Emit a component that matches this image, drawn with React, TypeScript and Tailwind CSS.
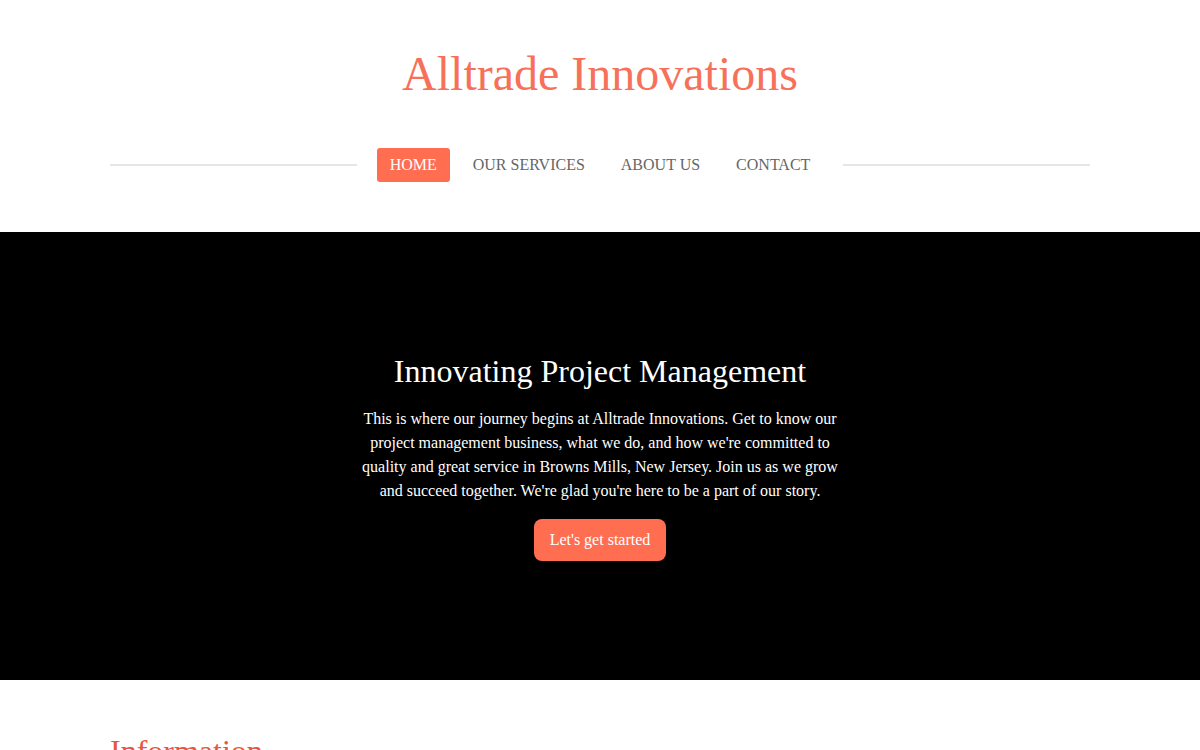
const NAV = ["HOME", "OUR SERVICES", "ABOUT US", "CONTACT"];

export default function App() {
  return (
    <div className="min-h-screen bg-white font-['Liberation_Serif',serif]">
      {/* Header */}
      <header className="pt-[45px] pb-[50px]">
        <h1 className="text-center text-[48px] leading-[58px] text-[#f7715a]">Alltrade Innovations</h1>
        <nav className="mx-auto mt-[45px] flex w-[980px] items-center gap-5">
          <div className="h-[2px] flex-1 bg-[#e6e6e6]" />
          <ul className="flex items-center gap-[10px]">
            {NAV.map((item, i) => (
              <li key={item}>
                <a
                  href="#"
                  className={`block rounded-[3px] px-[13px] py-[7px] text-[16px] leading-[20px] ${
                    i === 0 ? "bg-[#ff6e50] text-white" : "text-[#666666]"
                  }`}
                >
                  {item}
                </a>
              </li>
            ))}
          </ul>
          <div className="h-[2px] flex-1 bg-[#e6e6e6]" />
        </nav>
      </header>

      {/* Hero */}
      <section className="flex h-[448px] flex-col items-center justify-center bg-black text-white">
        <h2 className="text-[32px] leading-[40px]">Innovating Project Management</h2>
        <p className="mt-[16px] w-[484px] text-center text-[16px] leading-[24px]">
          This is where our journey begins at Alltrade Innovations. Get to know our project management business, what
          we do, and how we're committed to quality and great service in Browns Mills, New Jersey. Join us as we grow
          and succeed together. We're glad you're here to be a part of our story.
        </p>
        <a
          href="#"
          className="mt-[16px] rounded-lg bg-[#ff6e50] px-[16px] py-[11px] text-[16px] leading-[20px] text-white"
        >
          Let's get started
        </a>
      </section>

      {/* Information */}
      <section className="mx-auto w-[980px] pt-[51px]">
        <h2 className="text-[32px] leading-[40px] text-[#e8563f]">Information</h2>
      </section>
    </div>
  );
}
